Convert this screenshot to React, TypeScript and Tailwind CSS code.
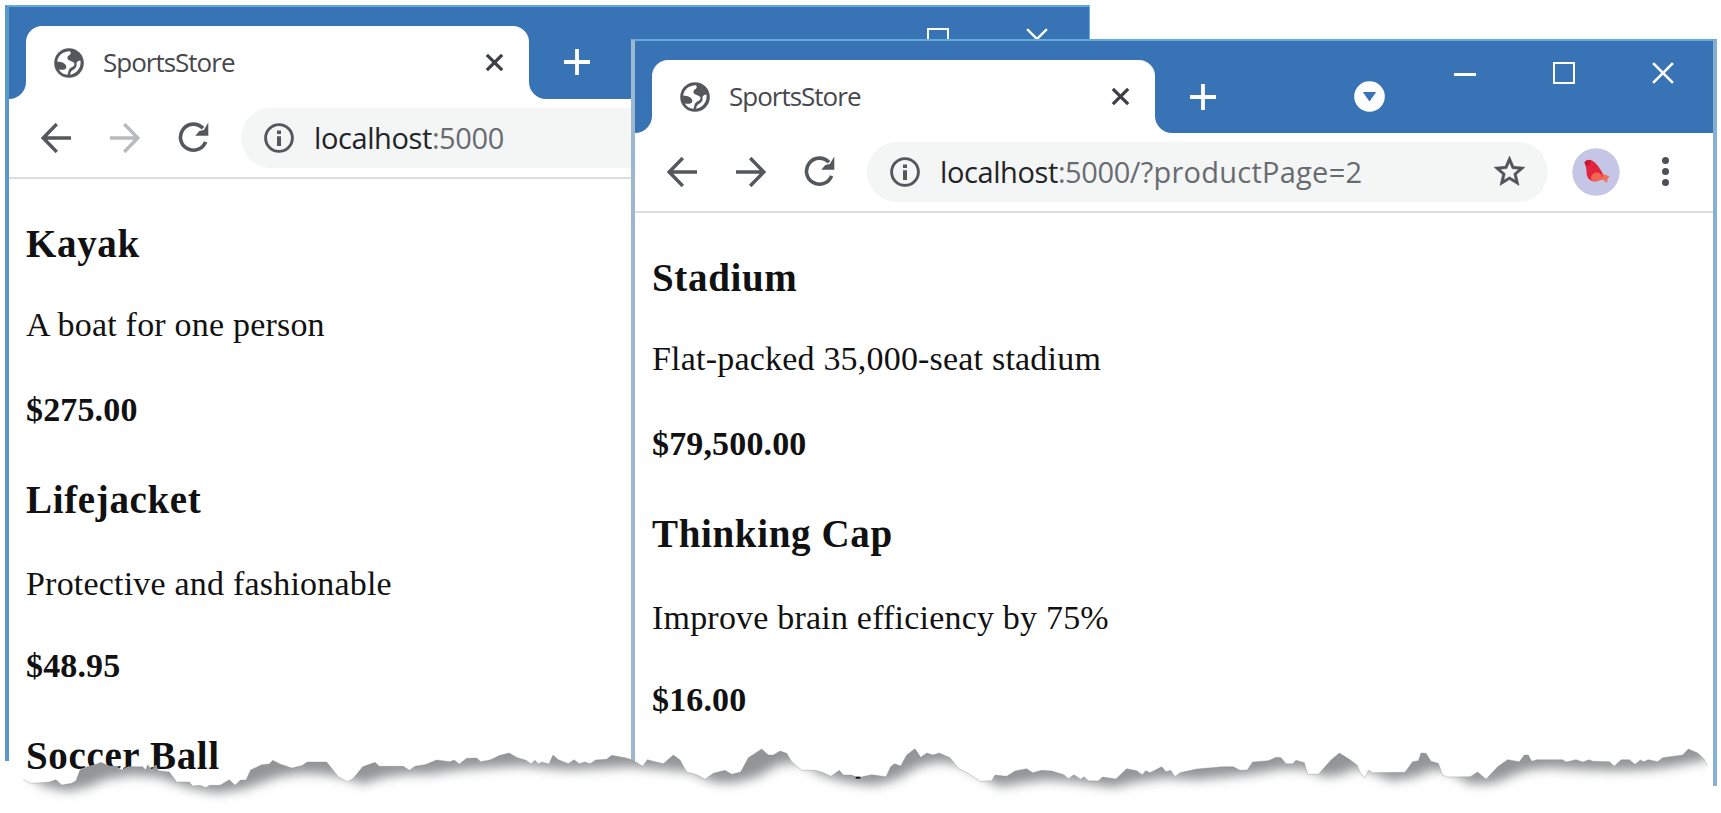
import React from "react";

type Product = { name: string; description: string; price: string };

const PAGE_ONE: Product[] = [
  { name: "Kayak", description: "A boat for one person", price: "$275.00" },
  { name: "Lifejacket", description: "Protective and fashionable", price: "$48.95" },
  { name: "Soccer Ball", description: "", price: "" },
];

const PAGE_TWO: Product[] = [
  { name: "Stadium", description: "Flat-packed 35,000-seat stadium", price: "$79,500.00" },
  { name: "Thinking Cap", description: "Improve brain efficiency by 75%", price: "$16.00" },
];

function Globe() {
  return (
    <svg viewBox="0 0 30 30" className="size-[30px] shrink-0">
      <circle cx="15" cy="15" r="14.8" fill="#54575c" />
      <path
        fill="#fff"
        d="M3.200 13.500C4 8 8.500 3.500 15.800 3.300C17.200 4.200 17 6.200 15.500 7C13 8.200 12.800 10.500 14.500 12C16.500 13 19.500 13.500 20.500 15.500C20.800 18 18.500 19 16.500 20C14.500 21 14.800 23 13.500 26.700C9.500 26.500 6.500 24.500 4.800 21.500C7.500 22 11 22 12 20.500C13 18 11.500 16 9.500 15C7.500 14 5.500 13.600 3.200 13.500Z"
      />
      <path
        fill="#fff"
        d="M26.400 12.500C27.600 18.500 23.800 25.200 16.200 26.800C16.200 24.500 17 23 19 22C21.500 20.600 23.200 18.500 22.500 15.500C22.500 13.800 24.300 12.800 26.400 12.500Z"
      />
    </svg>
  );
}

function Cross({ className, width }: { className: string; width: number }) {
  return (
    <svg viewBox="0 0 20 20" className={className} fill="none" stroke="currentColor" strokeWidth={width} overflow="visible">
      <path d="M1 1 19 19M19 1 1 19" />
    </svg>
  );
}

function Plus() {
  return (
    <svg viewBox="0 0 26 26" className="size-[26px]" stroke="#fff" strokeWidth="3.8">
      <path d="M13 0v26M0 13h26" />
    </svg>
  );
}

function Arrow({ className }: { className: string }) {
  return (
    <svg viewBox="0 0 30 30" className={className} fill="none" stroke="currentColor" strokeWidth="3.4">
      <path d="M30 15H2.500M15.800 1 2.200 15l13.600 14" />
    </svg>
  );
}

function Reload() {
  return (
    <svg viewBox="0 0 31 31" className="size-[31px]">
      <path d="M25 6.300A13 13 0 1 0 27.600 19.800" fill="none" stroke="#54575c" strokeWidth="3.600" />
      <path d="M30.300.5v13.200H17.300l4-4.600 4.500-1z" fill="#54575c" />
    </svg>
  );
}

function Info() {
  return (
    <svg viewBox="0 0 30 30" className="size-[30px] shrink-0">
      <circle cx="15" cy="15" r="13.400" fill="none" stroke="#54575c" strokeWidth="2.900" />
      <path d="M13 7.500h4v3.600h-4zM13 13.200h4v9.800h-4z" fill="#54575c" />
    </svg>
  );
}

function Star() {
  return (
    <svg viewBox="0 0 24 24" className="size-[37px]">
      <path
        fill="#505357"
        stroke="#505357"
        strokeWidth="0.350"
        d="M22 9.240l-7.190-.62L12 2 9.190 8.630 2 9.240l5.460 4.730L5.820 21 12 17.270 18.180 21l-1.630-7.030L22 9.240zM12 15.400l-3.760 2.270 1-4.280-3.320-2.880 4.380-.38L12 6.100l1.710 4.040 4.380.38-3.320 2.880 1 4.280L12 15.400z"
      />
    </svg>
  );
}

function Avatar() {
  return (
    <svg viewBox="0 0 48 48" className="size-12">
      <circle cx="24" cy="24" r="23.700" fill="#c5c6e6" />
      <path d="M25 23l5 2.500 7.500 3-2 2.500-.5 4-3.500-2.700-5-1z" fill="#f0705a" />
      <path d="M12.500 14.500c1-2.500 4.500-3.500 7.500-2 3.500 2 6 5 8 8.500 2.500 3.500 3.500 6 2 9-2 2.800-6.500 4.300-10 3-4-1.500-5.500-5-5.500-9.500 0-3-.5-5-2-9z" fill="#e2253d" />
      <path d="M19 29c1-4 5-6 9-3.500 2 1.500 2.700 3 1.500 5-2.500 2.500-6.200 3.300-9.200 2-1-.8-1.500-2-1.300-3.500z" fill="#f2654f" />
      <path d="M12.500 14.500c1-2 4-3 6.500-2l-1.500 4.500-3.500 1z" fill="#c51834" />
    </svg>
  );
}

function Tab() {
  return (
    <div className="flex h-[73px] w-[503px] shrink-0 items-center rounded-t-[16px] bg-white pr-[26px] pl-[28px]">
      <Globe />
      <span className="ml-[19px] flex-1 text-[26px] tracking-[-1px] text-[#45484d]">SportsStore</span>
      <Cross className="size-[17px] text-[#3c3f43]" width={3.8} />
    </div>
  );
}

function Toolbar({ path, forward, children }: { path: string; forward: boolean; children?: React.ReactNode }) {
  return (
    <div className="flex h-[80px] shrink-0 items-center border-b-2 border-[#dcddde] bg-white pb-px pl-[32px] text-[#54575c]">
      <Arrow className="size-[30px]" />
      <Arrow className={forward ? "ml-[39px] size-[30px] rotate-180" : "ml-[39px] size-[30px] rotate-180 text-[#b9babb]"} />
      <div className="ml-[38px]">
        <Reload />
      </div>
      <div className="ml-[32px] flex h-[60px] w-[681px] shrink-0 items-center rounded-full bg-[#f4f5f5] pr-[20px] pl-[23px]">
        <Info />
        <div className="ml-[20px] flex flex-1 text-[29px] leading-[40px]">
          <span className="tracking-[-0.4px] text-[#222427]">localhost</span>
          <span className="tracking-[-0.4px] text-[#686b70]">:5000</span>
          <span className="tracking-[0.25px] text-[#686b70]">{path}</span>
        </div>
        <Star />
      </div>
      {children}
    </div>
  );
}

function Products({ items }: { items: Product[] }) {
  return (
    <div className="pt-[43px] font-['Liberation_Serif',serif] whitespace-nowrap text-[#111]">
      {items.map((p, i) => (
        <article key={p.name} className="h-[256px] pl-[17px]">
          <h3 className="text-[39px] leading-[44px] font-bold tracking-[0.65px]">{p.name}</h3>
          <p className={i === 0 ? "mt-[39px] text-[34px] leading-[40px] tracking-[0.2px]" : "mt-[42px] text-[34px] leading-[40px] tracking-[0.2px]"}>
            {p.description}
          </p>
          <p className={i === 0 ? "mt-[45px] text-[34px] leading-[40px] font-bold tracking-[0.15px]" : "mt-[42px] text-[34px] leading-[40px] font-bold tracking-[0.15px]"}>
            {p.price}
          </p>
        </article>
      ))}
    </div>
  );
}

function TitleBar({ children }: { children: React.ReactNode }) {
  return (
    <div className="flex h-[92px] shrink-0 items-end bg-[#3873b6]">
      <div className="h-[30px] w-[17px] shrink-0 bg-white">
        <div className="h-full w-full rounded-br-[17px] bg-[#3873b6]" />
      </div>
      <Tab />
      <div className="h-[30px] w-[18px] shrink-0 bg-white">
        <div className="h-full w-full rounded-bl-[17px] bg-[#3873b6]" />
      </div>
      <div className="flex h-full flex-1 items-start">{children}</div>
    </div>
  );
}

/* Torn paper edge, in thirds of a pixel; each group is shifted by its own x offset. */
const TEAR: [number, string][] = [
  [0, "70,178 90,189 110,189 145,187 168,179 185,195 215,190 228,182 240,150 262,140 285,134 303,127 325,137 350,140 365,150 385,140 428,140 437,150 443,134 455,150 468,134 475,152 508,156 530,186 568,186 578,198 600,196 618,203 628,196 660,196 688,179 705,196 722,180 738,180 752,150 785,134 808,132 818,121 840,132 875,144 905,137 922,126 980,126 1015,170 1042,185 1060,175 1088,140 1125,127 1138,139 1210,139 1228,151 1245,139 1275,134"],
  [1290, "20,120 60,125 72,120 88,132 110,115 140,114 152,125 180,120 210,106 237,99 262,113 288,121 303,132 315,121 325,132 335,126 357,132 369,105 385,119 415,131 432,119 448,131 465,126 480,131 497,120 530,118 545,106 585,113 608,120 638,139 652,119 700,131 730,105 750,120 770,156 800,164 825,178 850,160 885,151 905,163 932,156 955,113 995,87 1015,105 1030,105 1050,93 1070,100 1085,125 1115,151 1155,151 1180,158 1203,169 1228,151 1240,165 1265,165 1280,172"],
  [2580, "0,172 35,164 78,170 92,140 103,131 122,138 140,105 165,86 182,112 200,99 218,105 238,99 270,113 295,145 325,160 360,184 395,182 405,165 440,169 465,153 500,146 518,158 545,151 575,153 612,164 625,176 642,164 662,178 672,170 685,182 715,183 727,171 768,177 800,146 830,152 847,164 857,152 870,158 905,140 918,155 932,151 945,170 960,158 1010,147 1088,140 1120,140 1140,151 1162,150 1178,126 1225,122 1248,112"],
  [3843, "0,113 15,131 35,131 45,121 70,128 80,163 112,163 150,120 175,99 205,118 228,135 240,163 252,172 262,151 275,158 372,157 395,125 412,122 420,99 435,100 450,124 472,130 485,165 500,171 568,170 590,156 615,178 650,140 680,119 715,125 730,105 742,105 752,124 768,119 845,119 855,126 885,119 905,126 925,119 935,124 985,125 1000,139 1020,119 1045,119 1062,133 1078,120 1088,125 1102,119 1130,125 1145,113 1205,105 1222,87 1250,99 1270,118 1280,140"],
];

const SHADE: [number, string][] = [
  [0, "80,185 130,220 200,237 260,225 320,200 400,188 480,195 560,225 650,243 740,228 830,195 900,183 970,185 1030,195 1090,215 1150,195 1220,185"],
  [1290, "0,185 90,172 200,165 280,160 350,168 420,172 520,168 600,163 700,172 780,178 850,210 910,212 980,195 1050,155 1110,152 1180,190 1240,207"],
  [2580, "20,218 60,216 110,200 180,160 240,148 300,158 360,190 420,223 480,213 560,203 640,208 760,225 830,208 920,196 1010,202 1100,193 1180,185"],
  [3843, "0,170 75,170 130,193 180,187 225,168 270,178 330,205 400,195 450,173 500,175 570,216 640,212 730,175 800,166 900,172 1000,175 1100,172 1180,162 1240,150 1280,145"],
];

function toPoints(groups: [number, string][]) {
  return groups.flatMap(([dx, pts]) =>
    pts.split(" ").map((p) => {
      const [x, y] = p.split(",").map(Number);
      return `${x + dx},${y}`;
    })
  );
}

function TornEdge() {
  const tear = toPoints(TEAR).join(" L");
  const shade = toPoints(SHADE).join(" L");
  const below = `M${tear} L5123,279 L70,279 Z`;
  return (
    <svg viewBox="0 0 5163 279" className="pointer-events-none absolute top-[720px] left-0 h-[93px] w-[1721px]">
      <defs>
        <clipPath id="below-tear">
          <path d={below} />
        </clipPath>
        <filter id="soften" x="-5%" y="-100%" width="110%" height="300%">
          <feGaussianBlur stdDeviation="16" />
        </filter>
      </defs>
      <path d={below} fill="#fff" />
      <g clipPath="url(#below-tear)">
        <path
          d={`M100,-60 L${shade} L5110,-60 Z`}
          transform="translate(0,-23)"
          fill="#939496"
          filter="url(#soften)"
        />
      </g>
      <path d={`M${tear}`} fill="none" stroke="#77797c" strokeWidth="3" opacity="0.3" />
      <rect x="2567" y="170" width="14" height="6" fill="#111" />
    </svg>
  );
}

export default function App() {
  return (
    <main className="relative h-[813px] w-[1721px] overflow-hidden bg-white font-['Open_Sans','Noto_Sans',sans-serif]">
      <section className="absolute top-[5px] left-[5px] h-[756px] w-[1085px] border-t-2 border-r border-l-[4px] border-t-[#64a9d8] border-r-[#6fb1dc] border-l-[#5a97cb]">
        <TitleBar>
          <div className="flex w-full items-start">
            <div className="mt-[42px] ml-[17px]">
              <Plus />
            </div>
            <div className="mt-[21px] ml-[337px] size-[22px] border-2 border-white" />
            <Cross className="mt-[21px] ml-[77px] size-[22px] text-white" width={2.2} />
          </div>
        </TitleBar>
        <Toolbar path="" forward={false} />
        <Products items={PAGE_ONE} />
      </section>

      <section className="absolute top-[39px] left-[631px] h-[747px] w-[1086px] border-t-2 border-r-[4px] border-l-[4px] border-t-[#64a9d8] border-r-[#85b0d4] border-l-[#9bb8d0] bg-white">
        <TitleBar>
          <div className="flex w-full items-start">
            <div className="mt-[43px] ml-[17px]">
              <Plus />
            </div>
            <svg viewBox="0 0 31 31" className="mt-[40px] ml-[138px] size-[31px]">
              <circle cx="15.500" cy="15.500" r="15.300" fill="#fff" />
              <path d="M8.800 11h13.400l-6.700 9.400z" fill="#3873b6" />
            </svg>
            <div className="mt-[32px] ml-[69px] h-[3px] w-[22px] bg-white" />
            <div className="mt-[21px] ml-[77px] size-[22px] border-2 border-white" />
            <Cross className="mt-[21px] ml-[77px] size-[22px] text-white" width={2.4} />
          </div>
        </TitleBar>
        <Toolbar path="/?productPage=2" forward>
          <div className="ml-[24px] shrink-0">
            <Avatar />
          </div>
          <div className="ml-[42px] flex flex-col gap-[4px]">
            <span className="size-[7px] rounded-full bg-[#4c4f53]" />
            <span className="size-[7px] rounded-full bg-[#4c4f53]" />
            <span className="size-[7px] rounded-full bg-[#4c4f53]" />
          </div>
        </Toolbar>
        <Products items={PAGE_TWO} />
      </section>

      <TornEdge />
    </main>
  );
}
